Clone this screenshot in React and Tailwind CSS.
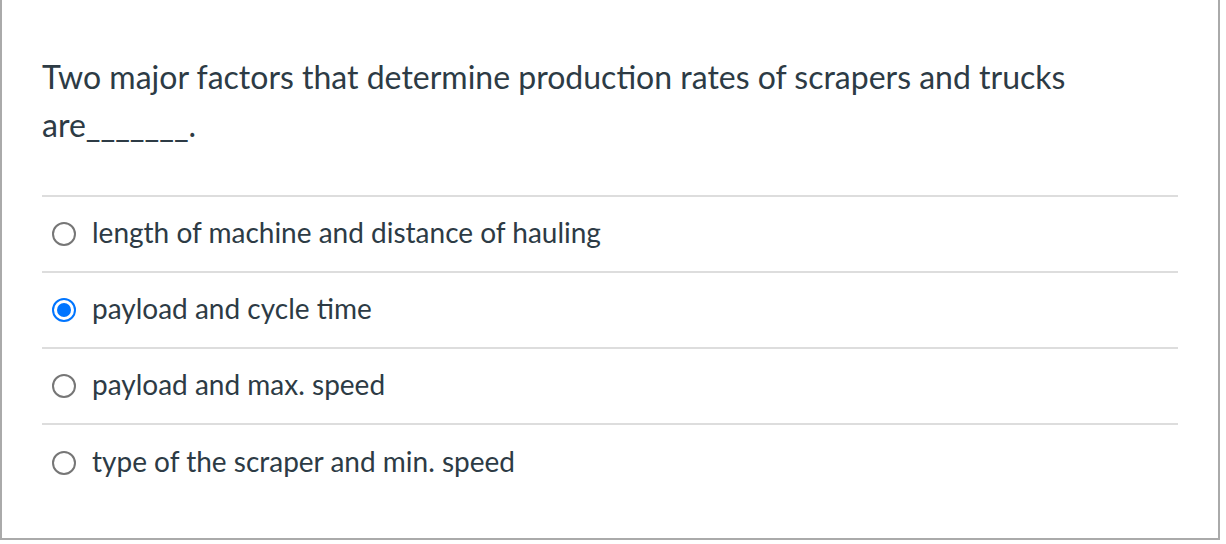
import React, { useState } from 'react';

const answers = [
  'length of machine and distance of hauling',
  'payload and cycle time',
  'payload and max. speed',
  'type of the scraper and min. speed',
];

function Radio({ checked }) {
  if (checked) {
    return (
      <span className="flex h-[24px] w-[24px] shrink-0 items-center justify-center rounded-full border-2 border-[#0075ff] bg-white">
        <span className="h-[14px] w-[14px] rounded-full bg-[#0075ff]"></span>
      </span>
    );
  }
  return <span className="h-[24px] w-[24px] shrink-0 rounded-full border-2 border-[#767676] bg-white"></span>;
}

export default function App() {
  const [selected, setSelected] = useState(1);

  return (
    <div className="h-[544px] w-[1226px] bg-white" style={{ fontFamily: 'Lato, "Noto Sans", sans-serif' }}>
      <div className="h-[540px] w-[1220px] border-b-2 border-l-2 border-r-2 border-[#aaaaaa] px-[40px] pt-[53px] text-[#2d3b45]">
        {/* Question */}
        <p className="text-[32px] leading-[48px]">
          Two major factors that determine production rates of scrapers and trucks are_______.
        </p>

        {/* Answers */}
        <div className="mt-[46px] border-t-2 border-[#dddddd]">
          {answers.map((text, i) => (
            <label
              key={text}
              onClick={() => setSelected(i)}
              className={`flex h-[76px] cursor-pointer items-center gap-[16px] pl-[10px] ${i < answers.length - 1 ? 'border-b-2 border-[#dddddd]' : ''}`}
            >
              <Radio checked={selected === i} />
              <span className="mb-[5px] text-[28px] leading-[36px]">{text}</span>
            </label>
          ))}
        </div>
      </div>
    </div>
  );
}
